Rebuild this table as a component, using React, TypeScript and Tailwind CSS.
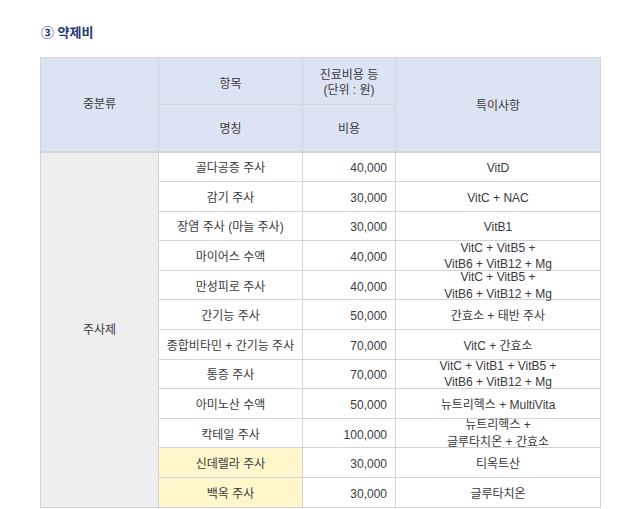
import React from 'react';

type Row = {
  name: string;
  cost: string;
  note: string[];
  highlight?: boolean;
};

const rows: Row[] = [
  { name: '골다공증 주사', cost: '40,000', note: ['VitD'] },
  { name: '감기 주사', cost: '30,000', note: ['VitC + NAC'] },
  { name: '장염 주사 (마늘 주사)', cost: '30,000', note: ['VitB1'] },
  { name: '마이어스 수액', cost: '40,000', note: ['VitC + VitB5 +', 'VitB6 + VitB12 + Mg'] },
  { name: '만성피로 주사', cost: '40,000', note: ['VitC + VitB5 +', 'VitB6 + VitB12 + Mg'] },
  { name: '간기능 주사', cost: '50,000', note: ['간효소 + 태반 주사'] },
  { name: '종합비타민 + 간기능 주사', cost: '70,000', note: ['VitC + 간효소'] },
  { name: '통증 주사', cost: '70,000', note: ['VitC + VitB1 + VitB5 +', 'VitB6 + VitB12 + Mg'] },
  { name: '아미노산 수액', cost: '50,000', note: ['뉴트리헥스 + MultiVita'] },
  { name: '칵테일 주사', cost: '100,000', note: ['뉴트리헥스 +', '글루타치온 + 간효소'] },
  { name: '신데렐라 주사', cost: '30,000', note: ['티옥트산'], highlight: true },
  { name: '백옥 주사', cost: '30,000', note: ['글루타치온'], highlight: true },
];

const cell = 'border border-[#d4d4d4] text-[12px] text-[#3a3a3a] p-0';
const head = 'border border-[#d4d4d4] bg-[#dce3f3] text-[12px] text-[#3a3a3a] font-normal text-center p-0';

const App: React.FC = () => {
  return (
    <div className="bg-white w-[640px] h-[509px] overflow-hidden font-['Liberation_Sans','Noto_Sans_CJK_KR',sans-serif]">
      <div className="pt-[24px] pl-[41px]">
        <h2 className="text-[13px] font-bold text-[#1f3a78] leading-[17px]">③ 약제비</h2>
      </div>
      <table className="ml-[40px] mt-[16px] w-[561px] border-collapse table-fixed">
        <colgroup>
          <col className="w-[118px]" />
          <col className="w-[144px]" />
          <col className="w-[93px]" />
          <col />
        </colgroup>
        <thead>
          <tr className="h-[47px]">
            <th rowSpan={2} className={`${head} border-b-2`}>중분류</th>
            <th className={`${head} pt-[6px]`}>항목</th>
            <th className={`${head} leading-[15px] pt-[4px]`}>
              진료비용 등
              <br />
              (단위 : 원)
            </th>
            <th rowSpan={2} className={`${head} border-b-2 pt-[3px]`}>특이사항</th>
          </tr>
          <tr className="h-[47px]">
            <th className={`${head} border-b-2 pt-[3px]`}>명칭</th>
            <th className={`${head} border-b-2 pt-[3px]`}>비용</th>
          </tr>
        </thead>
        <tbody>
          {rows.map((r, i) => (
            <tr key={r.name} className="h-[29.6px]">
              {i === 0 && (
                <td rowSpan={rows.length} className={`${cell} bg-[#eeeeee] text-center`}>
                  주사제
                </td>
              )}
              <td className={`${cell} text-center pt-[3px] ${r.highlight ? 'bg-[#fff6cc]' : 'bg-white'}`}>{r.name}</td>
              <td className={`${cell} text-right pr-[8px] pt-[3px]`}>{r.cost}</td>
              <td className={`${cell} text-center`}>
                <div className={`h-[28.6px] flex flex-col justify-center leading-[16.5px] ${r.note.length > 1 ? 'pt-[1px]' : 'pt-[3px]'}`}>
                  {r.note.map((n, k) => (
                    <div key={k}>{n}</div>
                  ))}
                </div>
              </td>
            </tr>
          ))}
        </tbody>
      </table>
    </div>
  );
};

export default App;
